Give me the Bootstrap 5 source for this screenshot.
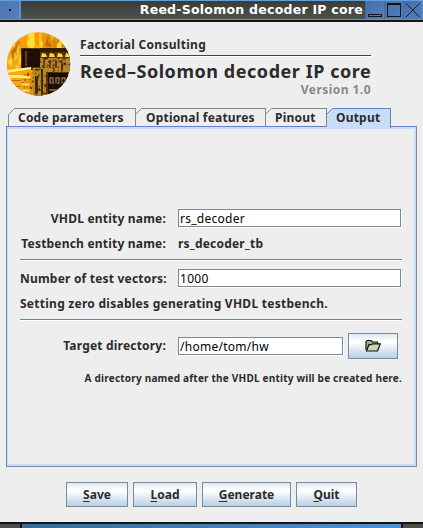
<!DOCTYPE html>
<html lang="en">
<head>
<meta charset="utf-8">
<title>Reed-Solomon decoder IP core</title>
<link rel="stylesheet" href="https://cdn.jsdelivr.net/npm/bootstrap@5.3.0/dist/css/bootstrap.min.css">
<style>
html,body{height:528px;overflow:hidden}
body{background:#eee;color:#2b2b2b;font:bold 12px/16px "Noto Sans","Open Sans",sans-serif;letter-spacing:.2px;margin:0}
svg{display:block;flex:none}
.window{width:423px;height:528px}
.titlebar{height:22px;border-top:1px solid #629fd8;border-bottom:2px solid #151515;background:#5b92cd;padding-bottom:1px}
.sys{width:19px;background:linear-gradient(135deg,#4a78b4,#587cb8)}
.sys i{width:2px;height:2px;background:#111}
.caption-bar{width:344px;margin-left:2px;background:linear-gradient(#383d3a,#4e524c);color:#fff;font:bold 12.5px/18px "DejaVu Sans",sans-serif;letter-spacing:.25px;padding-right:2px}
.tctl{width:19px;background:linear-gradient(135deg,#4570aa,#527ebd);border-left:1px solid #426ca5}
.head{height:86px;padding:10px 0 0 7px}
.brand{margin:5px 0 0 9px;width:291px}
.company{letter-spacing:.3px}
.rule{height:2px;background:#444;border-bottom:1px solid #fff;margin-top:2px}
.product{font-size:18px;line-height:20px;letter-spacing:.55px;margin-top:4px}
.version{color:#888;letter-spacing:.45px;line-height:15px;margin-top:1px}
.tabs{height:18px;padding-left:8px}
.tabx{height:18px;border-top:1px solid #7a8a99;border-right:1px solid #7a8a99;position:relative;line-height:18px;padding-left:10px;flex:none}
.tabx svg{position:absolute;left:-1px;top:-1px;stroke:#7a8a99}
.tabx.first{border-left:1px solid #7a8a99;padding-left:9px}
.tabx.sel{background:#c8ddf9;border-color:#6382bf;height:20px;z-index:1}
.tabx.sel svg{stroke:#6382bf}
.panelx{margin:0 6px;height:341px;width:411px;border:1px solid #6382bf;border-right-color:#7a8a99;border-bottom-color:#7a8a99;box-shadow:inset 0 2px #c8ddf9,inset 1px 0 #c8ddf9,inset -2px -2px #c8ddf9;padding:82px 14px 0 13px}
.lbl{width:146px;margin-right:12px}
.field{height:18px;border:1px solid #7a8a99;background:#fff;box-shadow:1px 1px #fff;color:#000;font:400 12px/17px "Noto Sans",sans-serif;letter-spacing:.27px;padding:0 1px;border-radius:0;width:223px}
.field.dir{width:165px}
.sep{height:2px;background:#6382bf;border-bottom:1px solid #fff}
.btnx{height:25px;border:1px solid #7a8a99;border-radius:0;padding:0;background:linear-gradient(#dde8f3,#fff 30%,#fff 34%,#b8cfe5);font:inherit;color:#2b2b2b;line-height:22px}
.btnx u{text-decoration-thickness:1px;text-underline-offset:2px}
.btnx.open{width:50px;height:26px}
.hint{font-size:10px;letter-spacing:.21px;line-height:14px}
.deskbar{height:6px;border-top:2px solid #151515;background:#151515}
.deskbar .corner{width:20px;background:#4b4e4a}
.deskbar .grip{width:379px;background:linear-gradient(90deg,#3b6a99,#5092cc)}
</style>
<script src="https://cdn.jsdelivr.net/npm/bootstrap@5.3.0/dist/js/bootstrap.bundle.min.js"></script>
</head>
<body>
<div class="window d-flex flex-column">
  <div class="titlebar d-flex flex-shrink-0">
    <div class="sys d-flex align-items-center justify-content-center"><i></i></div>
    <div class="caption-bar text-end text-nowrap">Reed-Solomon decoder IP core</div>
    <div class="tctl"><svg width="18" height="18" fill="none" stroke="#151515" shape-rendering="crispEdges"><path d="M2.500 13.500h13v2h-13z"/></svg></div>
    <div class="tctl"><svg width="18" height="18" fill="none" stroke="#151515" shape-rendering="crispEdges"><path d="M2.500 2.500h13v13h-13zM2 3.500h13"/></svg></div>
    <div class="tctl"><svg width="18" height="18" fill="none" stroke="#151515"><path d="M2 2.500L15.500 16M15.500 2.500L2 16"/></svg></div>
  </div>

  <div class="head d-flex flex-shrink-0">
    <svg width="64" height="64" viewBox="0 0 64 64" style="color-interpolation-filters:sRGB">
      <defs>
        <clipPath id="disc"><circle cx="31.500" cy="32" r="31.700"/></clipPath>
        <linearGradient id="fire" x2="1" y2=".3"><stop stop-color="#f8a810"/><stop offset=".5" stop-color="#f09a0c"/><stop offset="1" stop-color="#c97206"/></linearGradient>
        <filter id="flick" x="0" y="0" width="1" height="1"><feTurbulence type="fractalNoise" baseFrequency=".14 .06" numOctaves="3" seed="4"/><feColorMatrix values="0 0 0 0 1  0 0 0 0 .88  0 0 0 0 .2  5 0 0 0 -2.300"/></filter>
        <filter id="grain" x="0" y="0" width="1" height="1"><feTurbulence type="fractalNoise" baseFrequency=".35" numOctaves="2" seed="9"/><feColorMatrix values="0 0 0 0 .2  0 0 0 0 .08  0 0 0 0 0  3 0 0 0 -1.500"/></filter>
      </defs>
      <g clip-path="url(#disc)">
        <rect width="64" height="64" fill="url(#fire)"/>
        <path fill="#c56a05" d="M4 20l8-12 2 9-8 12zM22 12l4-9 3 10-6 4zM38 14l3-11 3 12zM49 14l2-9 4 10z"/>
        <rect width="64" height="40" filter="url(#flick)"/>
        <path fill="#5c3507" d="M14 16h19v4h31v44H27V38H14z"/>
        <path fill="#1d0d05" d="M15 17h18v18H18l-3 3z"/>
        <path fill="#75420a" d="M18 19h2v15h-2z"/>
        <path fill="#341d06" d="M33 16h31v4H33z"/>
        <path fill="#b5842c" d="M33 26h31v11H33z"/>
        <path fill="#6d4310" d="M36 28h2v8h-2zM42 28h2v8h-2zM48 28h2v8h-2zM54 28h2v8h-2z"/>
        <path fill="#b58d27" d="M26 36h13v28H26zM39 37h25v3H39z"/>
        <path fill="#4a2d08" d="M34 37h2v27h-2zM28 44h3v17h-3z"/>
        <path fill="#130c08" d="M41 41h20v23H41z"/>
        <path fill="none" stroke="#947237" stroke-width="1.500" d="M43 46h3v5h-3zM49 46h3v5h-3zM55 46h3v5h-3z"/>
        <path fill="#8b5b18" d="M42 57h18v2H42z"/>
        <rect x="14" y="16" width="50" height="48" filter="url(#grain)"/>
        <path fill="#ffd33a" d="M34 25l1-4 4 1 1 3zM42 25l1-4 4 1 1 3zM50 25l1-4 4 1 1 3zM58 25l1-4 4 1v3z"/>
        <path fill="#f7a80f" d="M0 37h24v3l-9 2v22H0z"/>
        <path fill="#f2b21c" d="M15 44h9v3h-9zM15 51h8v3h-8zM15 57h8v3h-8z"/>
        <path fill="#fff08c" d="M0 38l24-3v2L0 41zM0 43h14l9 2v1H0zM15 52h7v1h-7zM15 58h7v1h-7z"/>
        <path fill="#c06c05" d="M2 48h12v1H2zM5 54h9v1H5z"/>
      </g>
    </svg>
    <div class="brand text-nowrap">
      <div class="company">Factorial Consulting</div>
      <div class="rule"></div>
      <div class="product">Reed–Solomon decoder IP core</div>
      <div class="version text-end">Version 1.0</div>
    </div>
  </div>

  <div class="tabs d-flex flex-shrink-0 text-nowrap">
    <div class="tabx first" style="width:128px"><svg width="7" height="7"><path d="M0 7V0h7z" fill="#eee" stroke="none"/><path d="M.5 6.500l6-6" fill="none"/></svg>Code parameters</div>
    <div class="tabx" style="width:130px"><svg width="7" height="7"><path d="M0 7V0h7z" fill="#eee" stroke="none"/><path d="M.5 6.500l6-6M.5 0v7" fill="none"/></svg>Optional features</div>
    <div class="tabx" style="width:61px;padding-left:9px"><svg width="7" height="7"><path d="M0 7V0h7z" fill="#eee" stroke="none"/><path d="M.5 6.500l6-6M.5 0v7" fill="none"/></svg>Pinout</div>
    <div class="tabx sel" style="width:64px;padding-left:9px"><svg width="7" height="7"><path d="M0 7V0h7z" fill="#eee" stroke="none"/><path d="M.5 6.500l6-6M.5 0v7" fill="none"/></svg>Output</div>
  </div>

  <div class="panelx flex-shrink-0 text-nowrap">
    <div class="d-flex"><div class="lbl text-end" style="line-height:19px;height:18px">VHDL entity name:</div><div class="field">rs_decoder</div></div>
    <div class="d-flex" style="margin-top:9px"><div class="lbl text-end">Testbench entity name:</div><div>rs_decoder_tb</div></div>
    <div class="sep" style="margin-top:7px"></div>
    <div class="d-flex" style="margin-top:8px"><div class="lbl text-end" style="line-height:19px;height:18px">Number of test vectors:</div><div class="field">1000</div></div>
    <div style="margin-top:9px;letter-spacing:.26px">Setting zero disables generating VHDL testbench.</div>
    <div class="sep" style="margin-top:7px"></div>
    <div class="d-flex align-items-center" style="margin-top:12px"><div class="lbl text-end">Target directory:</div><div class="field dir">/home/tom/hw</div>
      <button class="btn btnx open d-flex align-items-center justify-content-center" style="margin-left:5px" aria-label="Browse"><svg width="16" height="14" viewBox="0 0 16 14"><path d="M1 11V3l1-1.500h4L7.500 3h5v3" fill="#aeb18e" stroke="#111" stroke-width="1.200"/><path d="M1.500 12L4 5.500l1.500.3L8 4.800h7.300L12.500 12z" fill="#d0d3af" stroke="#111" stroke-width="1.200"/></svg></button></div>
    <div class="hint text-end" style="margin-top:12px">A directory named after the VHDL entity will be created here.</div>
  </div>

  <div class="d-flex flex-shrink-0" style="padding:15px 0 0 66px;gap:5px;height:55px">
    <button class="btn btnx" style="width:62px"><u>S</u>ave</button>
    <button class="btn btnx" style="width:64px"><u>L</u>oad</button>
    <button class="btn btnx" style="width:89px"><u>G</u>enerate</button>
    <button class="btn btnx" style="width:61px"><u>Q</u>uit</button>
  </div>
  <div class="deskbar d-flex justify-content-between flex-shrink-0"><div class="corner"></div><div class="grip"></div><div class="corner"></div></div>
</div>
</body>
</html>
